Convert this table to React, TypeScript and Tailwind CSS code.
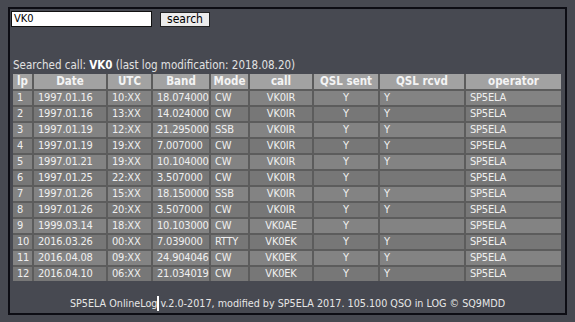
import React from "react";

const rows: string[][] = [
  ["1", "1997.01.16", "10:XX", "18.074000", "CW", "VK0IR", "Y", "Y", "SP5ELA"],
  ["2", "1997.01.16", "13:XX", "14.024000", "CW", "VK0IR", "Y", "Y", "SP5ELA"],
  ["3", "1997.01.19", "12:XX", "21.295000", "SSB", "VK0IR", "Y", "Y", "SP5ELA"],
  ["4", "1997.01.19", "19:XX", "7.007000", "CW", "VK0IR", "Y", "Y", "SP5ELA"],
  ["5", "1997.01.21", "19:XX", "10.104000", "CW", "VK0IR", "Y", "Y", "SP5ELA"],
  ["6", "1997.01.25", "22:XX", "3.507000", "CW", "VK0IR", "Y", "", "SP5ELA"],
  ["7", "1997.01.26", "15:XX", "18.150000", "SSB", "VK0IR", "Y", "Y", "SP5ELA"],
  ["8", "1997.01.26", "20:XX", "3.507000", "CW", "VK0IR", "Y", "Y", "SP5ELA"],
  ["9", "1999.03.14", "18:XX", "10.103000", "CW", "VK0AE", "Y", "", "SP5ELA"],
  ["10", "2016.03.26", "00:XX", "7.039000", "RTTY", "VK0EK", "Y", "Y", "SP5ELA"],
  ["11", "2016.04.08", "09:XX", "24.904046", "CW", "VK0EK", "Y", "Y", "SP5ELA"],
  ["12", "2016.04.10", "06:XX", "21.034019", "CW", "VK0EK", "Y", "Y", "SP5ELA"],
];

const headers = ["lp", "Date", "UTC", "Band", "Mode", "call", "QSL sent", "QSL rcvd", "operator"];
const centered = [false, false, false, false, false, true, true, false, false];

const font = { fontFamily: '"DejaVu Sans Condensed", "Liberation Sans", sans-serif' };

export default function App() {
  return (
    <div className="w-[575px] h-[322px] bg-[#474951] pt-[7px] pl-[8px]" style={font}>
      <div className="w-[559px] h-[308px] border-2 border-[#0d0d14] flex flex-col">
        <div className="flex items-center pt-[2px] pl-[1px] gap-[8px]">
          <div className="w-[141px] h-[16px] bg-white border border-[#111] text-[11px] leading-[14px] text-black pl-[2px]">
            VK0
          </div>
          <div className="w-[50px] h-[15px] bg-[#ececec] border border-[#222] text-[12px] leading-[13px] text-black flex items-center justify-center">
            search
          </div>
        </div>
        <div className="mt-[31px] pl-[3px] text-[11.5px] leading-[14px] text-[#e2e2e2]">
          Searched call: <b className="text-white">VK0</b> (last log modification: 2018.08.20)
        </div>
        <div className="ml-[3px] mt-[2px] w-[548px] grid grid-cols-[19px_72px_43px_56px_37px_62px_64px_84px_95px] gap-[2px] bg-[#5c5c5c] text-[11px] tracking-[-0.2px]">
          {headers.map((h) => (
            <div key={h} className="h-[15px] bg-[#a2a2a2] text-[#f4f4f4] font-bold text-center leading-[15px] text-[11.5px] tracking-normal">
              {h}
            </div>
          ))}
          {rows.map((r, i) =>
            r.map((c, j) => (
              <div
                key={i + "-" + j}
                className={
                  "h-[14px] leading-[14px] text-[#efefef] whitespace-nowrap overflow-hidden " +
                  (i % 2 === 0 ? "bg-[#838383] " : "bg-[#777777] ") +
                  (centered[j] ? "text-center" : "pl-[4px]")
                }
              >
                {c}
              </div>
            ))
          )}
        </div>
        <div className="mt-[16px] text-center text-[10.7px] leading-[14px] text-[#e6e6e6]">
          SP5ELA OnlineLog
          <span className="relative inline-block w-[3px] align-middle">
            <span className="absolute left-[0px] top-[-8px] w-[2px] h-[15px] bg-white" />
          </span>
          v.2.0-2017, modified by SP5ELA 2017. 105.100 QSO in LOG © SQ9MDD
        </div>
      </div>
    </div>
  );
}
